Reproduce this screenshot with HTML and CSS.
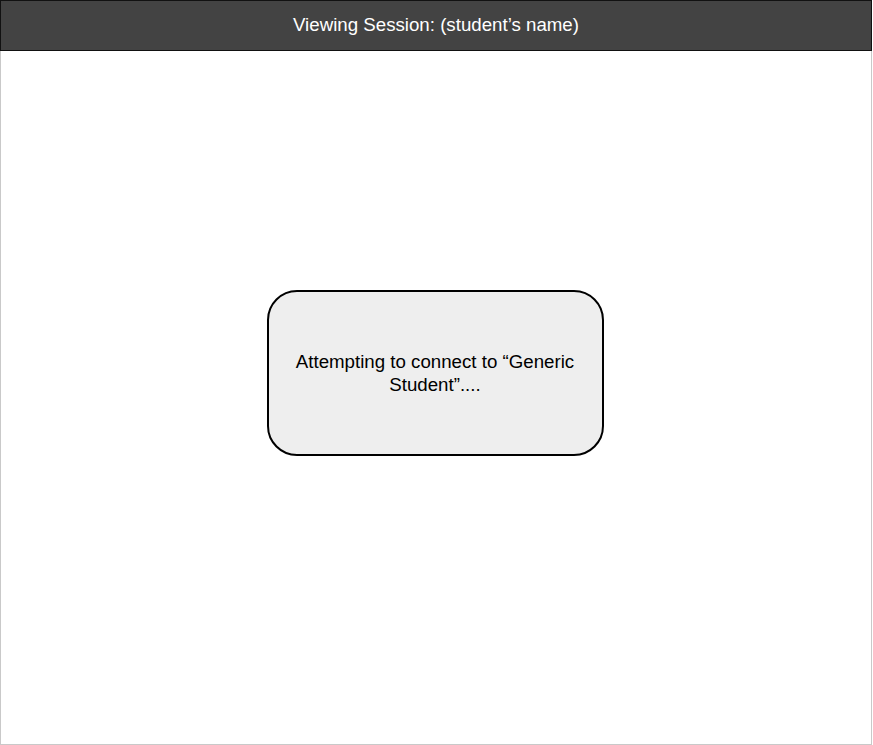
FILE: index.html
```html
<!DOCTYPE html>
<html>
<head>
<meta charset="utf-8">
<link rel="stylesheet" href="styles.css">
</head>
<body>
<div class="frame">
  <div class="header">Viewing Session: (student’s name)</div>
  <div class="content">
    <div class="dialog">Attempting to connect to “Generic Student”....</div>
  </div>
</div>
</body>
</html>
```
FILE: styles.css
```css
html, body {
  margin: 0;
  padding: 0;
  background: #ffffff;
}
.frame {
  box-sizing: border-box;
  width: 872px;
  height: 745px;
  border: 1px solid #c9c9c9;
  border-top: none;
  font-family: "Liberation Sans", Arial, sans-serif;
  display: flex;
  flex-direction: column;
}
.header {
  box-sizing: border-box;
  height: 51px;
  margin: 0 0 0 -1px;
  width: 872px;
  background: #434343;
  border: 1px solid #111111;
  color: #ffffff;
  font-size: 18.7px;
  display: flex;
  align-items: center;
  justify-content: center;
  padding-bottom: 1px;
}
.content {
  flex: 1;
  display: flex;
  justify-content: center;
  align-items: flex-start;
  padding-top: 239px;
}
.dialog {
  box-sizing: border-box;
  width: 337px;
  height: 166px;
  margin-right: 2px;
  border: 2px solid #000000;
  border-radius: 30px;
  background: #eeeeee;
  color: #000000;
  font-size: 18.7px;
  line-height: 23px;
  text-align: center;
  display: flex;
  align-items: center;
  justify-content: center;
  padding: 0 18px;
}
```
